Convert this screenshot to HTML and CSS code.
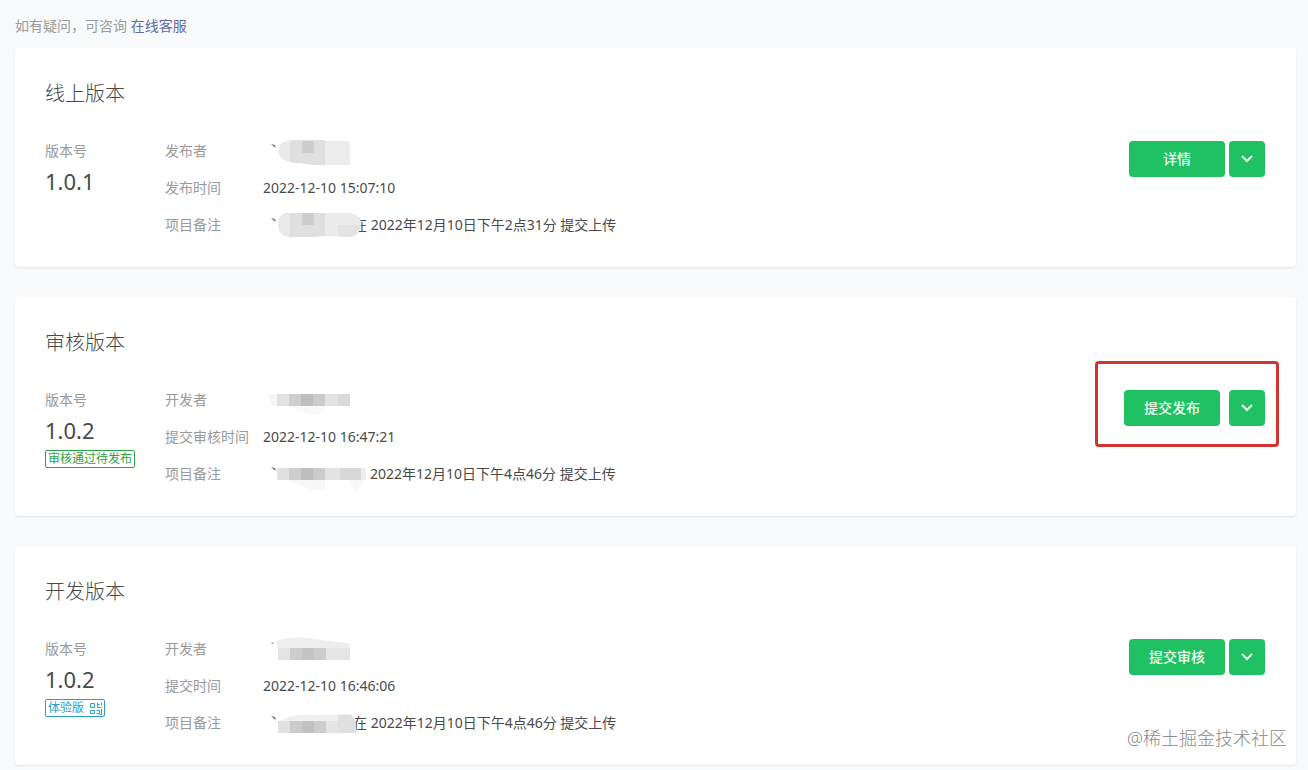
FILE: index.html
```html
<!DOCTYPE html>
<html lang="zh-CN">
<head>
<meta charset="utf-8">
<meta name="viewport" content="width=device-width, initial-scale=1">
<title>版本管理</title>
<link rel="stylesheet" href="styles.css">
</head>
<body>
<main class="page">
  <p class="help">如有疑问，可咨询 <a class="help-link" href="#service">在线客服</a></p>

  <section class="card">
    <h2 class="card-title">线上版本</h2>
    <div class="card-body">
      <div class="version">
        <span class="label">版本号</span>
        <strong class="version-number">1.0.1</strong>
      </div>
      <dl class="info">
        <dt class="label">发布者</dt>
        <dd class="value">
          <svg class="mosaic" width="90" height="20" viewBox="0 0 90 20" aria-hidden="true">
            <path d="M8 3l4 1 1 3-3-2z" fill="#777"/>
            <path d="M15 10Q16 1 24 0H28V21Q17 20 15 10z" fill="#e9e9e9"/>
            <path d="M27-1H62V24H50L27 21z" fill="#dfdfdf"/>
            <path d="M39 0H51V12H39z" fill="#cdcdcd"/>
            <path d="M62 0H84Q87 0 87 3V24H62z" fill="#ededed"/>
          </svg>
        </dd>
        <dt class="label">发布时间</dt>
        <dd class="value">2022-12-10 15:07:10</dd>
        <dt class="label">项目备注</dt>
        <dd class="value">
          <svg class="mosaic" width="90" height="20" viewBox="0 0 90 20" aria-hidden="true">
            <path d="M8 3l4 1 1 3-3-2z" fill="#777"/>
            <path d="M27-2H23Q15 0 15 10T25 22H27z" fill="#e9e9e9"/>
            <path d="M27-2H62V21L50 22H27z" fill="#dfdfdf"/>
            <path d="M39-2H51V10H39z" fill="#cdcdcd"/>
            <path d="M62-2H87Q98 0 98 9Q98 19 88 22L62 21z" fill="#ebebeb"/>
            <path d="M75 10H98Q98 19 88 22L75 21z" fill="#e3e3e3"/>
          </svg><span>在 2022年12月10日下午2点31分 提交上传</span>
        </dd>
      </dl>
      <div class="actions">
        <button class="btn" type="button">详情</button>
        <button class="btn btn-more" type="button" aria-label="更多操作">
          <svg width="12" height="8" viewBox="0 0 12 8" fill="none" stroke="currentColor" stroke-width="2" aria-hidden="true"><path d="M1 1l5 5 5-5"/></svg>
        </button>
      </div>
    </div>
  </section>

  <section class="card">
    <h2 class="card-title">审核版本</h2>
    <div class="card-body">
      <div class="version">
        <span class="label">版本号</span>
        <strong class="version-number">1.0.2</strong>
        <span class="tag tag-green">审核通过待发布</span>
      </div>
      <dl class="info">
        <dt class="label">开发者</dt>
        <dd class="value">
          <svg class="mosaic" width="90" height="20" viewBox="0 0 90 20" aria-hidden="true">
            <path d="M22 15H62V22Q52 27 44 24z" fill="#f9f9f9"/>
            <path d="M5 4H14V16H9z" fill="#f6f6f6"/>
            <path d="M14 4H26V16H14z" fill="#e3e3e3"/>
            <path d="M26 4H38V16H26z" fill="#cecece"/>
            <path d="M38 4H50V16H38z" fill="#bebebe"/>
            <path d="M50 4H62V16H50z" fill="#cbcbcb"/>
            <path d="M62 4H75V16H62z" fill="#e3e3e3"/>
            <path d="M75 4H87V16H75z" fill="#d9d9d9"/>
          </svg>
        </dd>
        <dt class="label">提交审核时间</dt>
        <dd class="value">2022-12-10 16:47:21</dd>
        <dt class="label">项目备注</dt>
        <dd class="value">
          <svg class="mosaic mosaic-wide" width="104" height="20" viewBox="0 0 104 20" aria-hidden="true">
            <path d="M8 3l4 1 1 3-3-2z" fill="#777"/>
            <path d="M22 15H62V25Q48 28 38 21zM87 15H102Q99 24 91 26z" fill="#f7f7f7"/>
            <path d="M14 4H26V16H14z" fill="#e1e1e1"/>
            <path d="M26 4H38V16H26z" fill="#cecece"/>
            <path d="M38 4H50V16H38z" fill="#bebebe"/>
            <path d="M50 4H62V16H50z" fill="#cbcbcb"/>
            <path d="M62 4H77V16H62z" fill="#e3e3e3"/>
            <path d="M77 4H98V16H77z" fill="#d8d8d8"/>
            <path d="M98 4H103V16H98z" fill="#efefef"/>
          </svg><span>2022年12月10日下午4点46分 提交上传</span>
        </dd>
      </dl>
      <div class="actions actions-marked">
        <button class="btn" type="button">提交发布</button>
        <button class="btn btn-more" type="button" aria-label="更多操作">
          <svg width="12" height="8" viewBox="0 0 12 8" fill="none" stroke="currentColor" stroke-width="2" aria-hidden="true"><path d="M1 1l5 5 5-5"/></svg>
        </button>
      </div>
    </div>
  </section>

  <section class="card">
    <h2 class="card-title">开发版本</h2>
    <div class="card-body">
      <div class="version">
        <span class="label">版本号</span>
        <strong class="version-number">1.0.2</strong>
        <span class="tag tag-blue">体验版
          <svg width="13" height="13" viewBox="0 0 13 13" fill="none" stroke="currentColor" aria-hidden="true">
            <path d="M1.500 1.500h4v4h-4zM1.500 8.500h4v3h-4zM8.500 .5v5h4M8.500 2.500h2M12.500 .5v3M7.500 8.500h3v3h-3M12.500 7v5.500h-2"/>
          </svg>
        </span>
      </div>
      <dl class="info">
        <dt class="label">开发者</dt>
        <dd class="value">
          <svg class="mosaic" width="90" height="20" viewBox="0 0 90 20" aria-hidden="true">
            <path d="M8 4l2-1 1 2h-2z" fill="#aaa"/>
            <path d="M14 9V1Q36-4 58 1L84 4Q87 5 87 9z" fill="#eee"/>
            <path d="M15 9H27V21H15z" fill="#e4e4e4"/>
            <path d="M27 9H39V21H27z" fill="#cdcdcd"/>
            <path d="M39 9H51V21H39z" fill="#c4c4c4"/>
            <path d="M51 9H63V21H51z" fill="#cdcdcd"/>
            <path d="M63 9H87V21H63z" fill="#e6e6e6"/>
          </svg>
        </dd>
        <dt class="label">提交时间</dt>
        <dd class="value">2022-12-10 16:46:06</dd>
        <dt class="label">项目备注</dt>
        <dd class="value">
          <svg class="mosaic" width="90" height="20" viewBox="0 0 90 20" aria-hidden="true">
            <path d="M8 3l4 1 1 3-3-2z" fill="#777"/>
            <path d="M15 8Q34 0 50 2L86 1Q92 2 93 8z" fill="#f0f0f0"/>
            <path d="M15 8H27V20H15z" fill="#e1e1e1"/>
            <path d="M27 8H39V20H27z" fill="#cbcbcb"/>
            <path d="M39 8H51V20H39z" fill="#c1c1c1"/>
            <path d="M51 8H63V20H51z" fill="#cdcdcd"/>
            <path d="M63 8H75V20H63z" fill="#e5e5e5"/>
            <path d="M75 2H88L93 8V20H75z" fill="#e0e0e0"/>
          </svg><span>在 2022年12月10日下午4点46分 提交上传</span>
        </dd>
      </dl>
      <div class="actions">
        <button class="btn" type="button">提交审核</button>
        <button class="btn btn-more" type="button" aria-label="更多操作">
          <svg width="12" height="8" viewBox="0 0 12 8" fill="none" stroke="currentColor" stroke-width="2" aria-hidden="true"><path d="M1 1l5 5 5-5"/></svg>
        </button>
      </div>
    </div>
  </section>

  <span class="watermark">@稀土掘金技术社区</span>
</main>
</body>
</html>
```
FILE: styles.css
```css
* {
  box-sizing: border-box;
}

body {
  margin: 0;
  background: #f8fafc;
  color: #4a4a4a;
  font: 14px/20px "Noto Sans", "Noto Sans CJK SC", sans-serif;
}

.page {
  position: relative;
  display: flex;
  flex-direction: column;
  gap: 30px;
  padding: 16px 12px 4px 15px;
}

.help {
  margin: 0 0 -18px;
  color: #9a9a9a;
}

.help-link {
  color: #5f6ba0;
  text-decoration: none;
}

.card {
  padding: 32px 31px 32px 30px;
  background: #fff;
  border-radius: 4px;
  box-shadow: 0 1px 2px #dfe6e8;
}

.card-title {
  margin: 0 0 33px;
  color: #484848;
  font-size: 20px;
  font-weight: 300;
  line-height: 28px;
}

.card-body {
  display: flex;
  align-items: flex-start;
}

.version {
  display: flex;
  flex-direction: column;
  align-items: flex-start;
  flex: none;
  width: 120px;
}

.label {
  color: #9a9a9a;
}

.version-number {
  margin: 4px 0;
  font-size: 22px;
  font-weight: 400;
  line-height: 32px;
}

.tag {
  display: flex;
  align-items: center;
  gap: 5px;
  padding: 0 2px;
  border: 1px solid;
  border-radius: 2px;
  font-size: 12px;
  line-height: 16px;
}

.tag-green {
  color: #2ba245;
}

.tag-blue {
  color: #2c9fd0;
}

.info {
  display: grid;
  grid-template-columns: 98px 1fr;
  row-gap: 17px;
  flex: 1;
  margin: 0;
}

.value {
  display: flex;
  margin: 0;
}

/* Pixelated cover over the account name, painted above the text that follows it */
.mosaic {
  position: relative;
  flex: none;
  overflow: visible;
}

.mosaic-wide {
  margin-right: 3px;
}

.actions {
  position: relative;
  display: flex;
  gap: 4px;
}

.actions-marked {
  gap: 9px;
}

.actions-marked::after {
  content: "";
  position: absolute;
  inset: -29px -14px -21px -29px;
  border: 3px solid #cf352e;
  border-radius: 4px;
  pointer-events: none;
}

.btn {
  display: flex;
  align-items: center;
  justify-content: center;
  width: 96px;
  height: 36px;
  padding: 0;
  border: 0;
  border-radius: 4px;
  background: #1fc163;
  color: #effff4;
  font: inherit;
  font-weight: 500;
}

.btn-more {
  width: 36px;
}

.watermark {
  position: absolute;
  right: 21px;
  bottom: 18px;
  color: #8a8a8a;
  font-size: 18px;
  font-weight: 300;
  line-height: 26px;
}
```
